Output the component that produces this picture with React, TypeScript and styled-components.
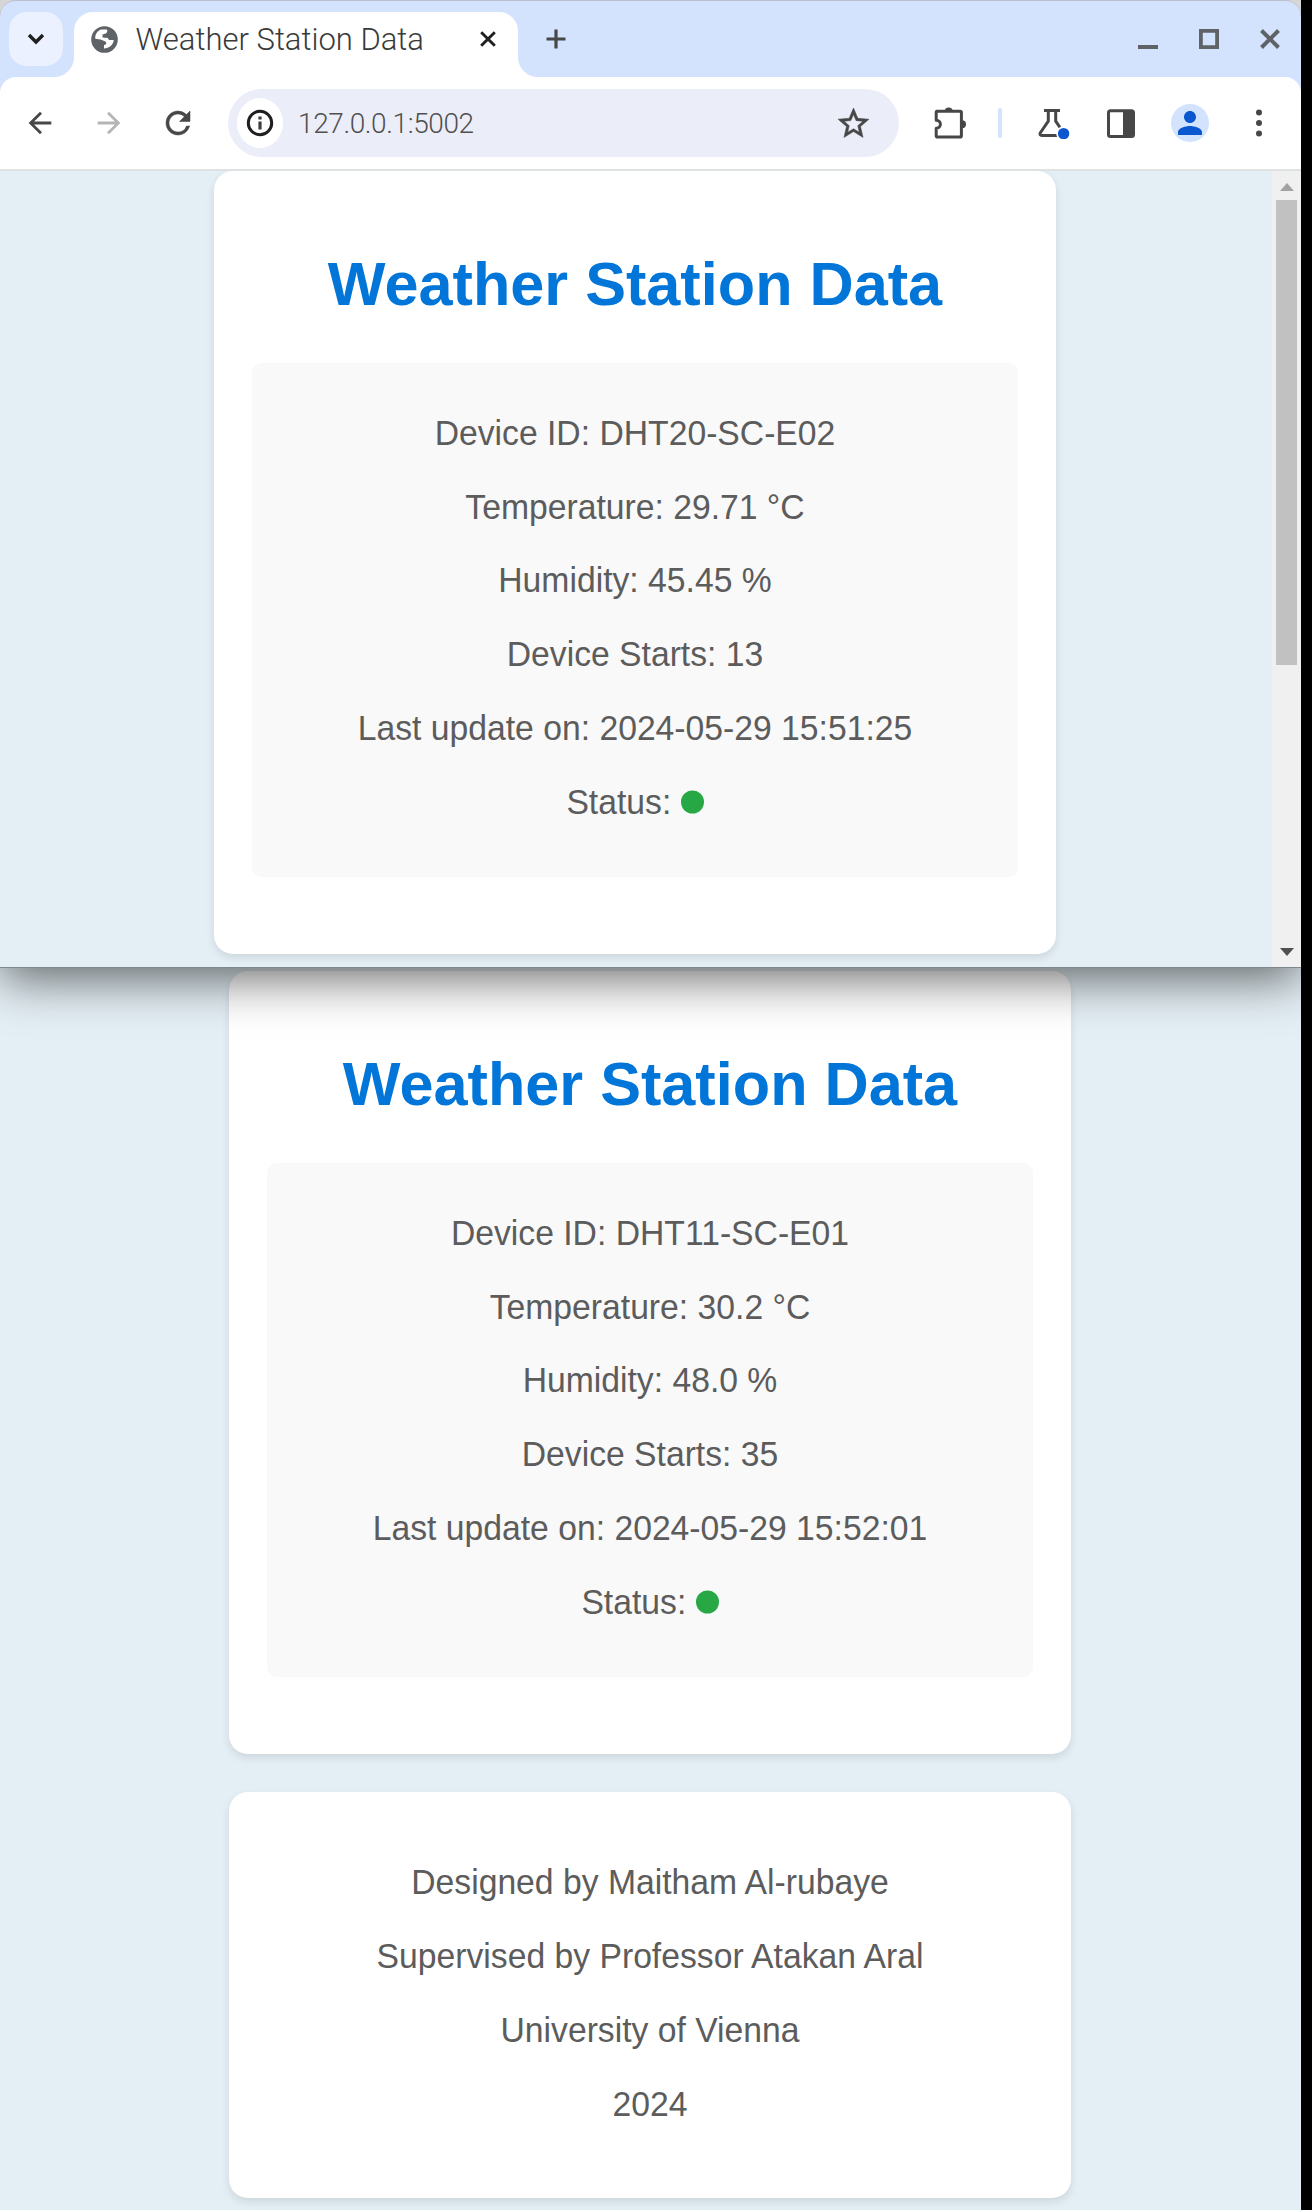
import React from 'react';
import styled, { createGlobalStyle } from 'styled-components';
import { MdArrowBack, MdArrowForward, MdRefresh, MdStarBorder, MdPerson } from 'react-icons/md';

const Global = createGlobalStyle`
  * { box-sizing: border-box; }
  html, body { margin: 0; background: #000; }
  body { font-family: "Liberation Sans", Arial, sans-serif; }
  svg { display: block; flex: none; }
`;

const Screen = styled.div`
  width: 1301px;
  height: 2210px;
  overflow: hidden;
  background: linear-gradient(#d6d6d6 0 30px, #e4eff5 30px);
`;

/* Browser window */
const Window = styled.section`
  position: relative;
  z-index: 1;
  height: 968px;
  overflow: visible;
  display: flex;
  flex-direction: column;
  background: #d3e2fd;
  border-radius: 16px 16px 0 0;
  border-bottom: 1px solid #7e888c;
  box-shadow: 0 10px 50px rgba(0, 0, 0, 0.6);
  clip-path: inset(0 0 -90px 0 round 16px 16px 0 0);
`;

const TabStrip = styled.header`
  height: 77px;
  flex: none;
  display: flex;
  align-items: flex-start;
  border-top: 1px solid #b9c0cd;
  border-radius: 16px 16px 0 0;
`;

const TabSearch = styled.div`
  width: 54px;
  height: 54px;
  margin: 11px 0 0 9px;
  border-radius: 18px;
  background: #ebf1fe;
  display: flex;
  align-items: center;
  justify-content: center;
`;

const Tab = styled.div`
  position: relative;
  width: 444px;
  height: 65px;
  margin: 11px 0 0 11px;
  padding: 0 22.5px 11px 17px;
  display: flex;
  align-items: center;
  background: #fff;
  border-radius: 19px 19px 0 0;

  &::before,
  &::after {
    content: '';
    position: absolute;
    bottom: 0;
    width: 20px;
    height: 20px;
  }
  &::before {
    right: 100%;
    background: radial-gradient(circle at 0 0, transparent 19.5px, #fff 20.5px);
  }
  &::after {
    left: 100%;
    background: radial-gradient(circle at 100% 0, transparent 19.5px, #fff 20.5px);
  }
`;

const TabTitle = styled.span`
  flex: 1;
  margin-left: 17.5px;
  font: 300 31px Roboto, sans-serif;
  color: #3a3a3a;
  white-space: nowrap;
`;

const StripButton = styled.div<{ $ml: number }>`
  height: 20px;
  margin: 28px 0 0 ${(p) => p.$ml}px;
`;

const Toolbar = styled.nav`
  height: 94px;
  flex: none;
  display: flex;
  align-items: center;
  background: #fff;
  border-bottom: 2px solid #dfe2e3;
  border-radius: 16px 16px 0 0;
`;

const Tool = styled.div<{ $w: number; $ml: number; $color?: string }>`
  width: ${(p) => p.$w}px;
  margin-left: ${(p) => p.$ml}px;
  flex: none;
  display: flex;
  justify-content: center;
  color: ${(p) => p.$color || '#474747'};
`;

const BoldTool = styled(Tool)`
  path:not([fill='none']) {
    stroke: currentColor;
    stroke-width: 0.35;
  }
`;

const Address = styled.div`
  width: 671px;
  height: 68px;
  flex: none;
  margin-left: 32px;
  padding: 0 27px 0 9px;
  border-radius: 34px;
  background: #ebeef8;
  display: flex;
  align-items: center;
  color: #474747;
`;

const SiteInfo = styled.div`
  width: 46px;
  height: 50px;
  border-radius: 50%;
  background: #fff;
  display: flex;
  align-items: center;
  justify-content: center;
`;

const Url = styled.span`
  flex: 1;
  margin-left: 15.5px;
  font: 300 28px Roboto, sans-serif;
  letter-spacing: -0.4px;
  color: #505050;
`;

const Divider = styled.div`
  width: 4px;
  height: 30px;
  margin-left: 32px;
  border-radius: 2px;
  background: #d3e3fd;
`;

const Avatar = styled.div`
  width: 38px;
  height: 38px;
  margin-left: 36px;
  border-radius: 50%;
  background: #d3e3fd;
  color: #0b57d0;
  display: flex;
  align-items: center;
  justify-content: center;
`;

const Viewport = styled.div`
  flex: 1;
  min-height: 0;
  display: flex;
  overflow: hidden;
  background: #e4eff5;
`;

const Scrollbar = styled.div`
  width: 29px;
  padding: 12px 4px 11px;
  display: flex;
  flex-direction: column;
  align-items: center;
  background: #f0f0f0;
`;

const Thumb = styled.div`
  width: 21px;
  height: 465px;
  margin: 9px 0 auto;
  background: #c1c1c1;
`;

/* Web page */
const Page = styled.main`
  flex: 1;
  padding-left: 214px;
`;

const LowerPage = styled.main`
  padding: 3px 0 0 229px;
`;

const Card = styled.article`
  width: 842px;
  height: 783px;
  margin-bottom: 38px;
  padding: 0 38px;
  display: flow-root;
  background: #fff;
  border-radius: 19px;
  box-shadow: 0 4px 9px rgba(0, 0, 0, 0.1);
`;

const CreditsCard = styled(Card)`
  height: 406px;
  padding-top: 53px;
`;

const Heading = styled.h1`
  margin: 78px 0 43.5px;
  font-size: 61.2px;
  line-height: 70px;
  text-align: center;
  color: #0275d8;
`;

const Panel = styled.div`
  height: 514.5px;
  padding-top: 33.2px;
  background: #f9f9f9;
  border-radius: 9.5px;
`;

const Line = styled.p`
  height: 73.85px;
  margin: 0;
  font-size: 33.7px;
  line-height: 73.85px;
  text-align: center;
  color: #5c5c5c;
  transform: scaleY(1.05);
`;

const StatusDot = styled.span`
  display: inline-block;
  width: 23px;
  height: 22px;
  border-radius: 50%;
  background: #28a745;
`;

type Station = { id: string; temperature: string; humidity: string; starts: number; updated: string };

const stations: Station[] = [
  { id: 'DHT20-SC-E02', temperature: '29.71', humidity: '45.45', starts: 13, updated: '2024-05-29 15:51:25' },
  { id: 'DHT11-SC-E01', temperature: '30.2', humidity: '48.0', starts: 35, updated: '2024-05-29 15:52:01' },
];

const StationCard = ({ data }: { data: Station }) => (
  <Card>
    <Heading>Weather Station Data</Heading>
    <Panel>
      <Line>Device ID: {data.id}</Line>
      <Line>Temperature: {data.temperature} °C</Line>
      <Line>Humidity: {data.humidity} %</Line>
      <Line>Device Starts: {data.starts}</Line>
      <Line>Last update on: {data.updated}</Line>
      <Line>
        Status: <StatusDot />
      </Line>
    </Panel>
  </Card>
);

const GlobeIcon = () => (
  <svg width="27" height="27" viewBox="0 0 27 27">
    <circle cx="13.5" cy="13.5" r="13.3" fill="#5f6368" />
    <path
      d="M10 3.6 16 3.4C17 6.2 15 8 11.5 8.2v3.3l5.3.4 1.2 2.1h4.7c-.3 4.5-4.6 8.4-9.7 8.4V19.200c2.500-.5 3-2.200 1.500-3.700L9.500 13.500l-5.200-.7C3.900 8.400 6.500 5 10 3.600z"
      fill="#fff"
    />
  </svg>
);

const ChevronIcon = () => (
  <svg width="18" height="12" viewBox="0 0 18 12" fill="none" stroke="#1f1f1f" strokeWidth="3.4">
    <path d="M2 2l7 7 7-7" />
  </svg>
);

const CrossIcon = ({ size, color, weight }: { size: number; color: string; weight: number }) => (
  <svg width={size} height={size} viewBox="0 0 20 20" stroke={color} strokeWidth={weight}>
    <path d="M1.5 1.5l17 17M18.5 1.5l-17 17" />
  </svg>
);

const InfoIcon = () => (
  <svg width="28" height="28" viewBox="0 0 28 28" fill="none">
    <circle cx="14" cy="14" r="11.7" stroke="#1f1f1f" strokeWidth="3" />
    <path d="M14 12.5v8M14 7.4v3" stroke="#3c3c3c" strokeWidth="3.2" />
  </svg>
);

const PuzzleIcon = () => (
  <svg width="32" height="32" viewBox="0 0 32 32">
    <path
      d="M2.5 4.8h23.6q1.3 0 1.3 1.3v23.3q0 1.3-1.3 1.3H3.5q-1.3 0-1.3-1.3v-7.6c5.6 0 5.6-8 0-8V6q0-1.2 1.3-1.2z"
      transform="translate(0 -.6)"
      fill="none"
      stroke="#474747"
      strokeWidth="3"
      strokeLinejoin="round"
    />
    <path d="M10.7 4.5a4 4 0 018 0zM28 13.2a4 4 0 010 8z" fill="#474747" />
  </svg>
);

const FlaskIcon = () => (
  <svg width="32" height="32" viewBox="0 0 32 32" fill="none">
    <path
      d="M6 3.5h16M10.3 4v10.2L2.2 26q-.9 2.3 1.7 2.5H24M17.7 4v10.2l6 8.8"
      stroke="#474747"
      strokeWidth="3"
      strokeLinejoin="round"
    />
    <circle cx="25.6" cy="26.6" r="7.4" fill="#fff" />
    <circle cx="25.6" cy="26.6" r="5.7" fill="#0b57d0" />
  </svg>
);

const SidePanelIcon = () => (
  <svg width="28" height="29" viewBox="0 0 28 29">
    <rect x="1.5" y="1.8" width="25" height="25.6" rx="2" fill="none" stroke="#474747" strokeWidth="3" />
    <path d="M16 2h10v25H16z" fill="#474747" />
  </svg>
);

const MenuIcon = () => (
  <svg width="8" height="28" viewBox="0 0 8 28" fill="#474747">
    <circle cx="4" cy="3.4" r="3" />
    <circle cx="4" cy="14" r="3" />
    <circle cx="4" cy="24.6" r="3" />
  </svg>
);

export default function App() {
  return (
    <>
      <Global />
      <Screen>
        <Window>
          <TabStrip>
            <TabSearch>
              <ChevronIcon />
            </TabSearch>
            <Tab>
              <GlobeIcon />
              <TabTitle>Weather Station Data</TabTitle>
              <CrossIcon size={16} color="#1f1f1f" weight={3.6} />
            </Tab>
            <StripButton $ml={28}>
              <svg width="20" height="20" viewBox="0 0 20 20" stroke="#474747" strokeWidth="3.2">
                <path d="M10 .5v19M.5 10h19" />
              </svg>
            </StripButton>
            <StripButton $ml={572}>
              <svg width="20" height="20" viewBox="0 0 20 20">
                <path d="M0 16h20v4H0z" fill="#5f6368" />
              </svg>
            </StripButton>
            <StripButton $ml={41}>
              <svg width="20" height="20" viewBox="0 0 20 20" fill="none" stroke="#5f6368" strokeWidth="3.8">
                <path d="M1.9 1.9h16.2v16.2H1.9z" />
              </svg>
            </StripButton>
            <StripButton $ml={41}>
              <CrossIcon size={20} color="#5f6368" weight={4} />
            </StripButton>
          </TabStrip>
          <Toolbar>
            <Tool $w={34} $ml={23}>
              <MdArrowBack size={34} />
            </Tool>
            <Tool $w={34} $ml={34.5} $color="#b5b5b5">
              <MdArrowForward size={34} />
            </Tool>
            <BoldTool $w={36} $ml={34}>
              <MdRefresh size={36} />
            </BoldTool>
            <Address>
              <SiteInfo>
                <InfoIcon />
              </SiteInfo>
              <Url>127.0.0.1:5002</Url>
              <BoldTool $w={37} $ml={0}>
                <MdStarBorder size={37} />
              </BoldTool>
            </Address>
            <Tool $w={32} $ml={35.5}>
              <PuzzleIcon />
            </Tool>
            <Divider />
            <Tool $w={32} $ml={36}>
              <FlaskIcon />
            </Tool>
            <Tool $w={28} $ml={36.5}>
              <SidePanelIcon />
            </Tool>
            <Avatar>
              <MdPerson size={36} />
            </Avatar>
            <Tool $w={8} $ml={46}>
              <MenuIcon />
            </Tool>
          </Toolbar>
          <Viewport>
            <Page>
              <StationCard data={stations[0]} />
            </Page>
            <Scrollbar>
              <svg width="14" height="8" viewBox="0 0 14 8">
                <path d="M7 0l7 8H0z" fill="#a3a3a3" />
              </svg>
              <Thumb />
              <svg width="14" height="8" viewBox="0 0 14 8">
                <path d="M0 0h14L7 8z" fill="#505050" />
              </svg>
            </Scrollbar>
          </Viewport>
        </Window>
        <LowerPage>
          <StationCard data={stations[1]} />
          <CreditsCard>
            <Line>Designed by Maitham Al-rubaye</Line>
            <Line>Supervised by Professor Atakan Aral</Line>
            <Line>University of Vienna</Line>
            <Line>2024</Line>
          </CreditsCard>
        </LowerPage>
      </Screen>
    </>
  );
}
